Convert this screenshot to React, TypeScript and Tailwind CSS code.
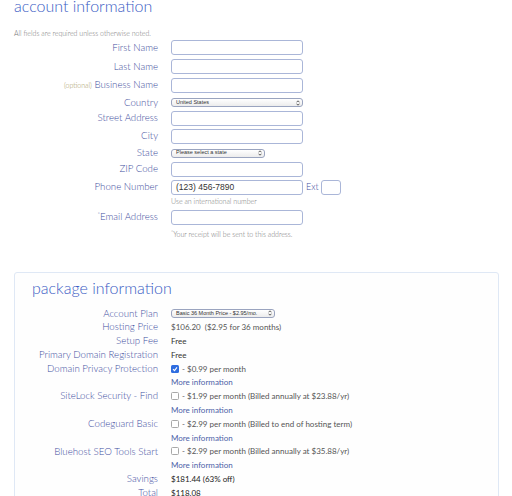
import React from 'react';

const LABEL = 'text-[9.7px] leading-none font-light text-[#3f4f9e] text-right w-[158px] shrink-0 whitespace-nowrap';

const TextInput: React.FC<{ w?: string; value?: string }> = ({ w = 'w-[132px]', value }) => (
  <div className={`${w} h-[15px] border border-[#aab6d8] rounded-[3px] bg-white flex items-center px-[4px] text-[8.5px] text-[#333] font-['Liberation_Sans',sans-serif]`}>
    {value}
  </div>
);

const Select: React.FC<{ w: string; text: string }> = ({ w, text }) => (
  <div className={`${w} h-[9px] border border-[#9aa4bf] rounded-[3px] bg-gradient-to-b from-white to-[#ececec] flex items-center justify-between pl-[4px] pr-[2px] font-['Liberation_Sans',sans-serif]`}>
    <span className="text-[5.5px] leading-none text-[#333] whitespace-nowrap">{text}</span>
    <svg width="4" height="6" viewBox="0 0 4 6">
      <path d="M0.5 2.3 L2 0.8 L3.5 2.3 M0.5 3.7 L2 5.2 L3.5 3.7" stroke="#333" strokeWidth="0.8" fill="none" />
    </svg>
  </div>
);

const Row: React.FC<{ label: React.ReactNode; children: React.ReactNode; className?: string }> = ({ label, children, className = '' }) => (
  <div className={`flex items-center gap-[13px] ${className}`}>
    <div className={LABEL}>{label}</div>
    {children}
  </div>
);

const Check: React.FC<{ on?: boolean }> = ({ on }) =>
  on ? (
    <span className="w-[8px] h-[8px] rounded-[1.5px] bg-[#2f6de0] flex items-center justify-center">
      <svg width="6" height="6" viewBox="0 0 6 6">
        <path d="M1 3.2 L2.5 4.6 L5 1.4" stroke="white" strokeWidth="1.1" fill="none" />
      </svg>
    </span>
  ) : (
    <span className="w-[8px] h-[8px] rounded-[1.5px] border border-[#a8a8a8] bg-white" />
  );

const PkgRow: React.FC<{ label: string; children: React.ReactNode }> = ({ label, children }) => (
  <div className="flex items-center gap-[13px] h-[13.8px]">
    <div className="text-[9.7px] leading-none font-light text-[#3f4f9e] text-right w-[143px] shrink-0 whitespace-nowrap">{label}</div>
    <div className="flex items-center gap-[3px] text-[8px] leading-none text-[#555] whitespace-nowrap">{children}</div>
  </div>
);

const More = () => (
  <div className="flex h-[13.8px] items-center pl-[156px] text-[8px] leading-none text-[#4d5ea8]">More information</div>
);

export default function App() {
  return (
    <div className="w-[512px] h-[496px] overflow-hidden bg-white font-['Lato',sans-serif]">
      <div className="pl-[14px]">
        <h1 className="text-[16px] leading-none font-light text-[#3a5cc4] mt-[-2px]">account information</h1>
        <p className="text-[7px] leading-none text-[#777] font-light mt-[16px]">All fields are required unless otherwise noted.</p>
      </div>
      <div className="mt-[3px]">
        <Row label="First Name"><TextInput /></Row>
        <Row label="Last Name" className="mt-[4px]"><TextInput /></Row>
        <Row label={<><span className="text-[7px] text-[#a3955a]">(optional)</span> Business Name</>} className="mt-[3.5px]"><TextInput /></Row>
        <Row label="Country" className="mt-[4px] h-[12px]"><Select w="w-[132px]" text="United States" /></Row>
        <Row label="Street Address" className="mt-[2px]"><TextInput /></Row>
        <Row label="City" className="mt-[3px]"><TextInput /></Row>
        <Row label="State" className="mt-[3px] h-[13px]"><Select w="w-[94px]" text="Please select a state" /></Row>
        <Row label="ZIP Code" className="mt-[2px]"><TextInput /></Row>
        <Row label="Phone Number" className="mt-[3px]">
          <div className="flex items-center">
            <TextInput value="(123) 456-7890" />
            <span className="text-[9px] font-light text-[#3f4f9e] ml-[3px] mr-[2px]">Ext</span>
            <TextInput w="w-[20px]" />
          </div>
        </Row>
        <div className="pl-[171px] mt-[3px] text-[7px] font-light leading-none text-[#777]">Use an international number</div>
        <Row label={<><span className="text-[6px] align-top">*</span>Email Address</>} className="mt-[5px]"><TextInput /></Row>
        <div className="pl-[171px] mt-[6px] text-[7px] font-light leading-none text-[#777]">
          <span className="text-[5px] align-top">*</span>Your receipt will be sent to this address.
        </div>
      </div>

      <div className="ml-[14px] mt-[34px] w-[485px] h-[240px] border border-[#dfe8f5] rounded-[3px] bg-[#fefefe]">
        <h2 className="pl-[17px] pt-[7px] text-[16px] leading-none font-light text-[#3a5cc4]">package information</h2>
        <div className="mt-[11px]">
          <PkgRow label="Account Plan"><Select w="w-[104px]" text="Basic 36 Month Price - $2.95/mo." /></PkgRow>
          <PkgRow label="Hosting Price">$106.20&nbsp;&nbsp;($2.95 for 36 months)</PkgRow>
          <PkgRow label="Setup Fee"><span className="text-[#333]">Free</span></PkgRow>
          <PkgRow label="Primary Domain Registration"><span className="text-[#333]">Free</span></PkgRow>
          <PkgRow label="Domain Privacy Protection"><Check on /> - $0.99 per month</PkgRow>
          <More />
          <PkgRow label="SiteLock Security - Find"><Check /> - $1.99 per month (Billed annually at $23.88/yr)</PkgRow>
          <More />
          <PkgRow label="Codeguard Basic"><Check /> - $2.99 per month (Billed to end of hosting term)</PkgRow>
          <More />
          <PkgRow label="Bluehost SEO Tools Start"><Check /> - $2.99 per month (Billed annually at $35.88/yr)</PkgRow>
          <More />
          <PkgRow label="Savings"><span className="text-[#222]">$181.44 (63% off)</span></PkgRow>
          <PkgRow label="Total"><span className="text-[#222]">$118.08</span></PkgRow>
        </div>
      </div>
    </div>
  );
}
